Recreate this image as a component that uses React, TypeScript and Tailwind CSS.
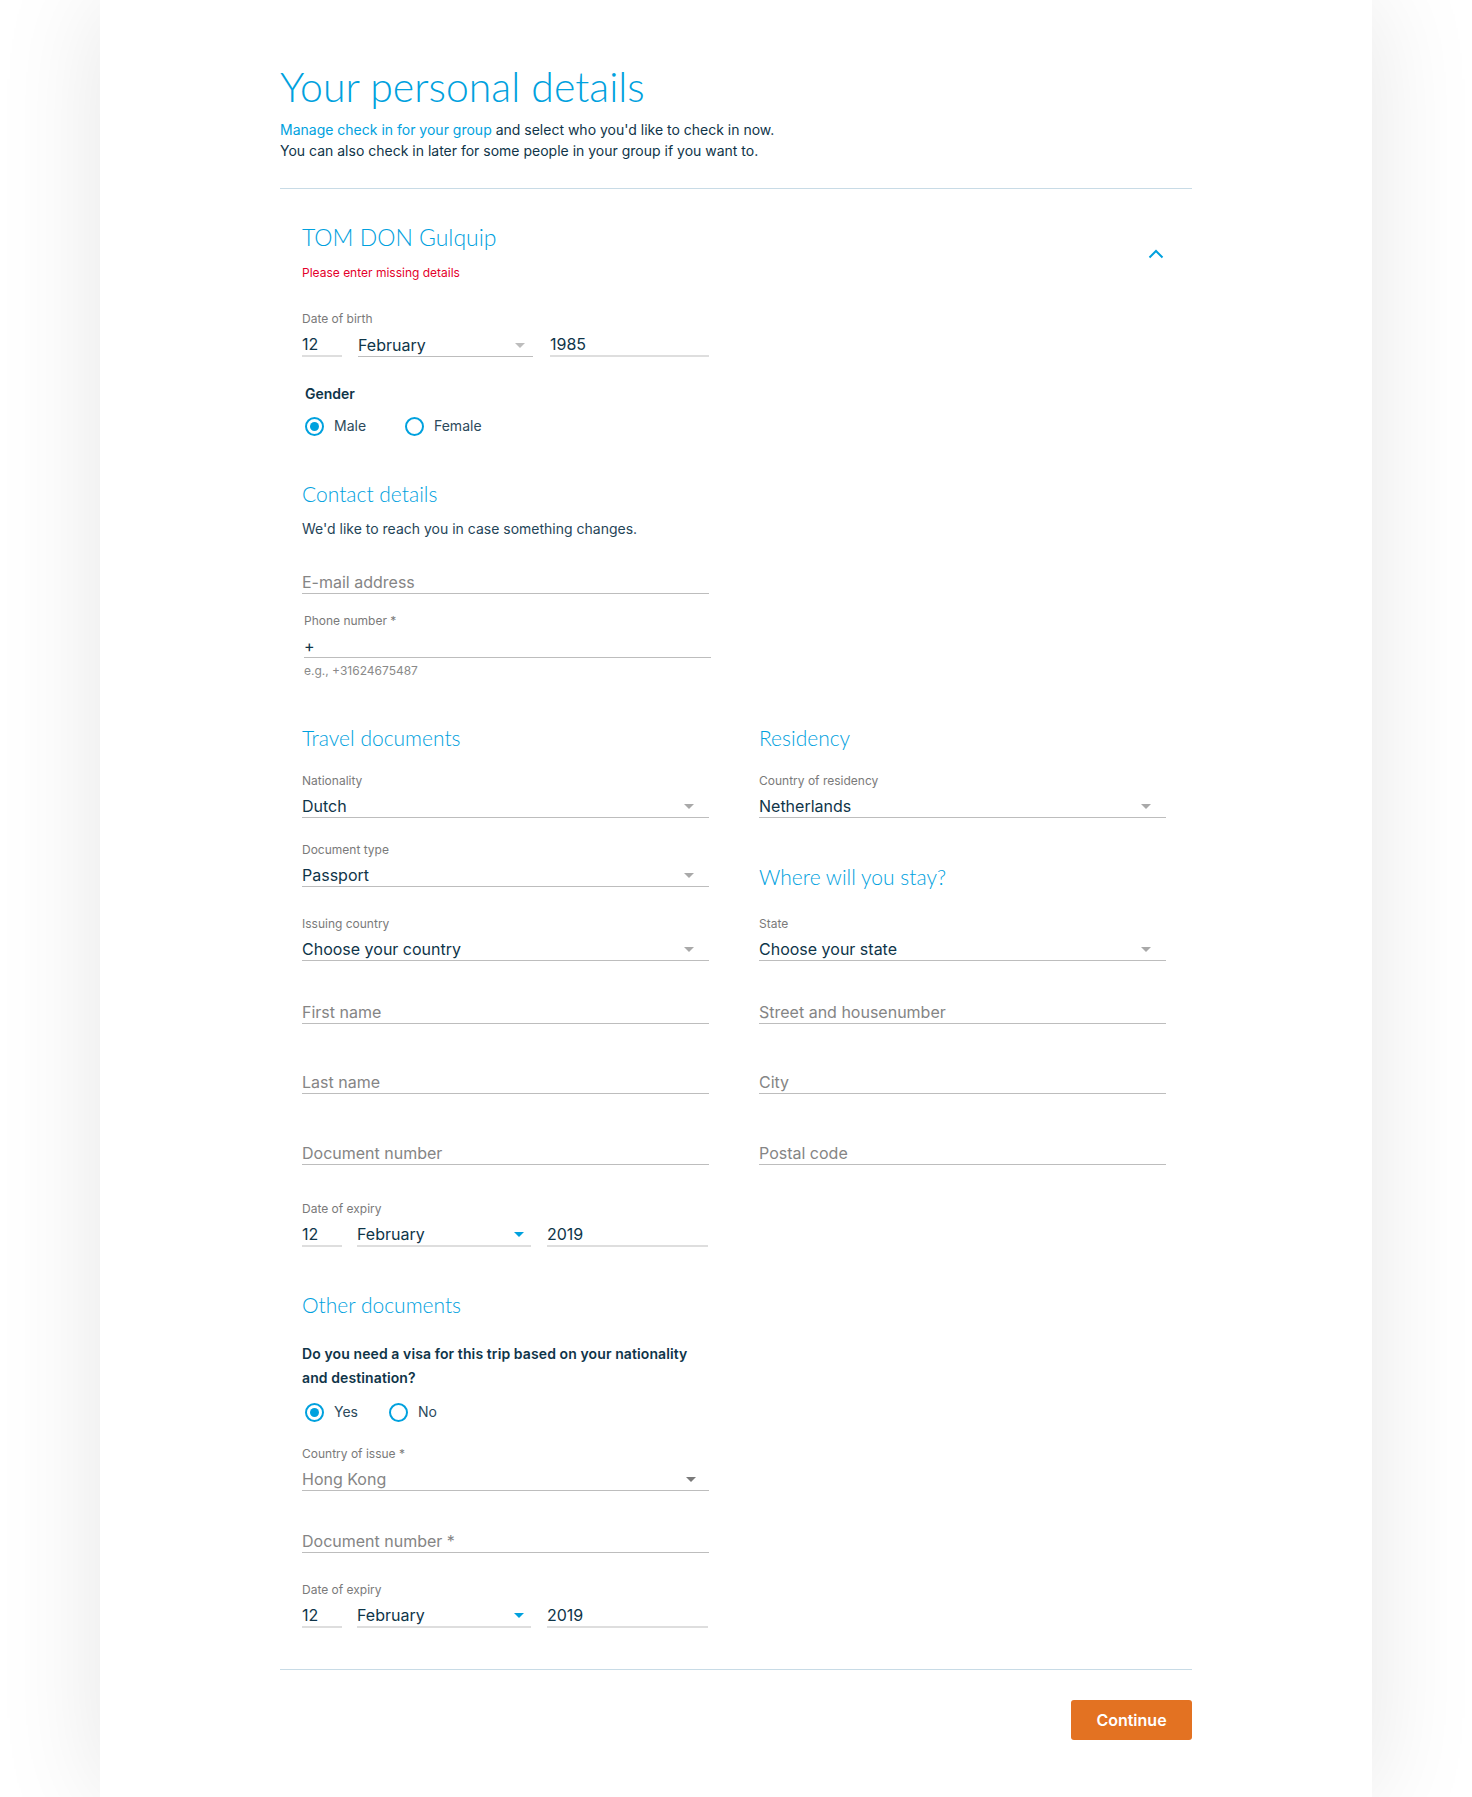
import React from "react";

function Caret({ className }: { className: string }) {
  return (
    <svg width="10" height="5" viewBox="0 0 10 5" className={className}>
      <path d="M0 0h10L5 5z" fill="currentColor" />
    </svg>
  );
}

function FieldLabel({ children, className = "" }: { children: React.ReactNode; className?: string }) {
  return <div className={"text-xs leading-4 text-[#7a7a7a] " + className}>{children}</div>;
}

function SectionTitle({ children, className = "" }: { children: React.ReactNode; className?: string }) {
  return (
    <h3 className={"font-['Lato','Open_Sans',sans-serif] text-[21px] font-light leading-[30px] text-[#00a1de] " + className}>
      {children}
    </h3>
  );
}

function Select({
  label,
  value,
  className = "",
  valueClass = "text-[#0f3549]",
  caretClass = "mr-[15px] text-[#a9a9a9]",
}: {
  label: string;
  value: string;
  className?: string;
  valueClass?: string;
  caretClass?: string;
}) {
  return (
    <div className={"w-[407px] " + className}>
      <FieldLabel>{label}</FieldLabel>
      <div className="mt-1.5 flex h-[23px] items-center justify-between border-b border-[#bdbdbd]">
        <span className={"text-base leading-[22px] " + valueClass}>{value}</span>
        <Caret className={caretClass} />
      </div>
    </div>
  );
}

function TextInput({ placeholder, className = "" }: { placeholder: string; className?: string }) {
  return (
    <div className={"h-[23px] w-[407px] border-b border-[#bdbdbd] text-base leading-[22px] text-[#858585] " + className}>
      {placeholder}
    </div>
  );
}

function DateRow({
  label,
  year,
  monthClass,
  yearClass,
  caretClass,
  className = "",
}: {
  label: string;
  year: string;
  monthClass: string;
  yearClass: string;
  caretClass: string;
  className?: string;
}) {
  return (
    <div className={className}>
      <FieldLabel>{label}</FieldLabel>
      <div className="mt-1.5 flex items-end text-base leading-[22px] text-[#0f3549]">
        <div className="h-6 w-10 border-b-2 border-[#dedede]">12</div>
        <div className={"flex items-center justify-between " + monthClass}>
          <span>February</span>
          <Caret className={caretClass} />
        </div>
        <div className={"h-6 border-b-2 border-[#dedede] " + yearClass}>{year}</div>
      </div>
    </div>
  );
}

function Radio({ label, checked, className = "" }: { label: string; checked?: boolean; className?: string }) {
  return (
    <div className={"flex items-center gap-[10px] " + className}>
      <span className="flex h-[19px] w-[19px] items-center justify-center rounded-full border-2 border-[#00a1de]">
        {checked && <span className="h-[9px] w-[9px] rounded-full bg-[#00a1de]" />}
      </span>
      <span className="text-sm leading-[22px] text-[#2c4a5c]">{label}</span>
    </div>
  );
}

export default function App() {
  return (
    <div className="min-h-screen bg-white font-['Inter','Liberation_Sans',sans-serif]">
      <div className="mx-auto min-h-screen w-[1272px] bg-white px-[180px] pb-[56px] pt-[63px] shadow-[0_0_100px_rgba(0,0,0,0.1)]">
        <h1 className="font-['Lato','Open_Sans',sans-serif] text-[41px] font-light leading-[48px] text-[#00a1de]">
          Your personal details
        </h1>
        <p className="mt-[8px] text-sm leading-[21px] text-[#0f3549]">
          <span className="text-[#00a1de]">Manage check in for your group</span> and select who you'd like to check in now.
          <br />
          You can also check in later for some people in your group if you want to.
        </p>
        <div className="mt-[27px] h-px bg-[#c8dbe6]" />

        <section className="pl-[22px] pr-[26px]">
          <div className="mt-8 flex items-start justify-between">
            <div>
              <h2 className="font-['Lato','Open_Sans',sans-serif] text-[23px] font-light leading-8 text-[#00a1de]">
                TOM DON Gulquip
              </h2>
              <p className="mt-3 text-xs leading-4 text-[#e4002b]">Please enter missing details</p>
            </div>
            <svg width="16" height="10" viewBox="0 0 16 10" className="mr-[2px] mt-[28px]">
              <path d="M1.5 8.5 8 2l6.5 6.5" fill="none" stroke="#00a1de" strokeWidth="2" />
            </svg>
          </div>

          <DateRow
            label="Date of birth"
            year="1985"
            className="mt-[30px]"
            monthClass="ml-4 w-[175px] h-[23px] border-b border-[#bdbdbd] pr-[8px]"
            yearClass="ml-[17px] w-[159px]"
            caretClass="text-[#bdbdbd]"
          />

          <div className="mt-[27px] pl-[3px] text-sm font-semibold leading-5 text-[#0f3549]">Gender</div>
          <div className="mt-[11px] flex pl-[3px]">
            <Radio label="Male" checked className="w-[100px]" />
            <Radio label="Female" />
          </div>

          <SectionTitle className="mt-[42px]">Contact details</SectionTitle>
          <p className="mt-[10px] text-sm leading-5 text-[#1f4558]">We'd like to reach you in case something changes.</p>

          <TextInput placeholder="E-mail address" className="mt-8" />

          <div className="ml-[2px] mt-[19px] w-[407px]">
            <FieldLabel>Phone number *</FieldLabel>
            <div className="mt-1.5 h-[23px] border-b border-[#bdbdbd] text-base leading-[22px] text-[#0f3549]">+</div>
            <div className="mt-[5px] text-xs leading-4 text-[#8a8a8a]">e.g., +31624675487</div>
          </div>

          <div className="mt-[44px] flex gap-[50px]">
            <div className="flex w-[407px] flex-col">
              <SectionTitle>Travel documents</SectionTitle>
              <Select label="Nationality" value="Dutch" className="mt-5" />
              <Select label="Document type" value="Passport" className="mt-6" />
              <Select label="Issuing country" value="Choose your country" className="mt-[29px]" />
              <TextInput placeholder="First name" className="mt-10" />
              <TextInput placeholder="Last name" className="mt-[47px]" />
              <TextInput placeholder="Document number" className="mt-12" />
              <DateRow
                label="Date of expiry"
                year="2019"
                className="mt-9"
                monthClass="ml-[15px] w-[174px] h-6 border-b-2 border-[#dedede] pr-[7px]"
                yearClass="ml-4 w-[161px]"
                caretClass="text-[#00a1de]"
              />
            </div>
            <div className="flex w-[407px] flex-col">
              <SectionTitle>Residency</SectionTitle>
              <Select label="Country of residency" value="Netherlands" className="mt-5" />
              <SectionTitle className="mt-[44px]">Where will you stay?</SectionTitle>
              <Select label="State" value="Choose your state" className="mt-6" />
              <TextInput placeholder="Street and housenumber" className="mt-10" />
              <TextInput placeholder="City" className="mt-[47px]" />
              <TextInput placeholder="Postal code" className="mt-12" />
            </div>
          </div>

          <SectionTitle className="mt-[43px]">Other documents</SectionTitle>
          <p className="mt-[22px] text-sm font-semibold leading-6 tracking-[0.1px] text-[#0f3549]">
            Do you need a visa for this trip based on your nationality
            <br />
            and destination?
          </p>
          <div className="mt-[11px] flex pl-[3px]">
            <Radio label="Yes" checked className="w-[84px]" />
            <Radio label="No" />
          </div>

          <Select
            label="Country of issue *"
            value="Hong Kong"
            className="mt-[23px]"
            valueClass="text-[#858585]"
            caretClass="mr-[13px] text-[#7a7a7a]"
          />
          <TextInput placeholder="Document number *" className="mt-[39px]" />
          <DateRow
            label="Date of expiry"
            year="2019"
            className="mt-[29px]"
            monthClass="ml-[15px] w-[174px] h-6 border-b-2 border-[#dedede] pr-[7px]"
            yearClass="ml-4 w-[161px]"
            caretClass="text-[#00a1de]"
          />
        </section>

        <div className="mt-[41px] h-px bg-[#c8dbe6]" />
        <div className="mt-[30px] flex justify-end">
          <button className="h-10 w-[121px] rounded-[3px] bg-[#e37222] text-base font-semibold text-white">Continue</button>
        </div>
      </div>
    </div>
  );
}
